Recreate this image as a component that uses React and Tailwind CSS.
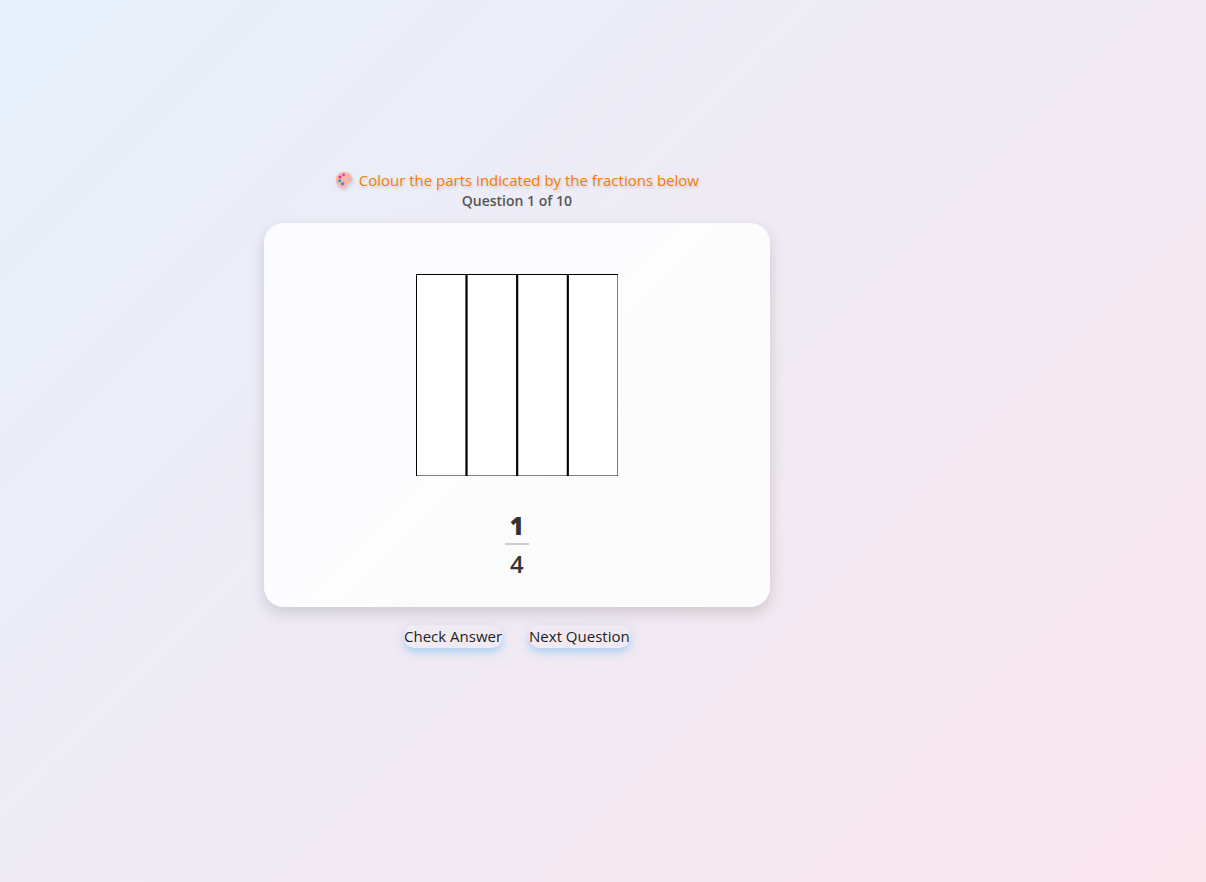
import React, { useState } from "react";

const questions = [
  { numerator: 1, denominator: 4 },
  { numerator: 2, denominator: 3 },
  { numerator: 3, denominator: 5 },
  { numerator: 1, denominator: 2 },
  { numerator: 5, denominator: 6 },
  { numerator: 3, denominator: 4 },
  { numerator: 2, denominator: 5 },
  { numerator: 1, denominator: 3 },
  { numerator: 4, denominator: 6 },
  { numerator: 4, denominator: 5 },
];

const SHAPE_SIZE = 202.5;

function PaletteIcon() {
  return (
    <svg viewBox="0 0 18 18" className="size-[18px] drop-shadow-[1px_2px_2px_rgba(0,0,0,0.15)]" aria-hidden="true">
      <path
        d="M9 1C4.400 1 1 4.400 1 8.800c0 4.400 3.400 8.200 7.600 8.200 2 0 2.900-.9 2.900-2.100 0-1.100-.5-1.700.2-2.500.7-.7 1.900-.3 3.200-.7 1.500-.5 2.200-1.800 2.200-3.700C17.100 4 13.500 1 9 1z"
        fill="#ffb3a3"
      />
      <circle cx="8.500" cy="3.800" r="1.500" fill="#c850c8" />
      <circle cx="5" cy="6" r="1.500" fill="#e0358e" />
      <circle cx="4.600" cy="9.700" r="1.500" fill="#26a69a" />
      <circle cx="7.700" cy="12.800" r="1.700" fill="#4285f4" />
      <circle cx="13.300" cy="8" r="1.700" fill="#cdbfcb" />
    </svg>
  );
}

export default function App() {
  const [index, setIndex] = useState(0);
  const [filled, setFilled] = useState([]);
  const [message, setMessage] = useState("");
  const { numerator, denominator } = questions[index];

  const togglePart = (part) => {
    setMessage("");
    setFilled((prev) => (prev.includes(part) ? prev.filter((p) => p !== part) : [...prev, part]));
  };

  const checkAnswer = () => {
    setMessage(filled.length === numerator ? "Correct!" : "Try again!");
  };

  const nextQuestion = () => {
    setIndex((index + 1) % questions.length);
    setFilled([]);
    setMessage("");
  };

  const partWidth = SHAPE_SIZE / denominator;

  return (
    <div className="min-h-screen bg-[linear-gradient(135deg,#e6f0fb_0%,#fae5ed_100%)] font-['Open_Sans',sans-serif] text-[15px] leading-5 text-[#222]">
      <main className="flex w-6/7 flex-col items-center pt-[170px]">
        <h1 className="flex items-center gap-1.5 text-[#f57c00] text-shadow-[1px_2px_3px_rgba(0,0,0,0.15)]">
          <PaletteIcon />
          Colour the parts indicated by the fractions below
        </h1>
        <p className="text-sm leading-[22px] font-semibold text-[#555]">
          Question {index + 1} of {questions.length}
        </p>

        {/* Question card */}
        <section className="mt-[11px] flex w-[49%] flex-col items-center rounded-[20px] bg-white/85 pt-[51px] pb-6 shadow-[0_6px_15px_rgba(0,0,0,0.15)]">
          <svg viewBox="0 0 202 202" className="size-[202px]">
            {Array.from({ length: denominator }, (_, part) => (
              <rect
                key={part}
                x={part * partWidth}
                width={partWidth}
                height={SHAPE_SIZE}
                fill={filled.includes(part) ? "#ffb74d" : "#fff"}
                stroke="#000"
                strokeWidth="2"
                className="cursor-pointer"
                onClick={() => togglePart(part)}
              />
            ))}
          </svg>

          {/* Fraction */}
          <div className="mt-8 flex w-6 flex-col items-center text-2xl text-[#333]">
            <span className="w-full border-b-2 border-[#ccc] text-center leading-[35px] font-extrabold">
              {numerator}
            </span>
            <span className="leading-[38px] font-semibold">{denominator}</span>
          </div>
        </section>

        <div className="mt-[18px] flex gap-[27px]">
          <button
            onClick={checkAnswer}
            className="rounded-[10px] leading-[23px] shadow-[0_4px_8px_rgba(100,181,246,0.5)]"
          >
            Check Answer
          </button>
          <button
            onClick={nextQuestion}
            className="rounded-[10px] leading-[23px] shadow-[0_4px_8px_rgba(100,181,246,0.5)]"
          >
            Next Question
          </button>
        </div>
        {message && <p className="mt-4 font-semibold">{message}</p>}
      </main>
    </div>
  );
}
